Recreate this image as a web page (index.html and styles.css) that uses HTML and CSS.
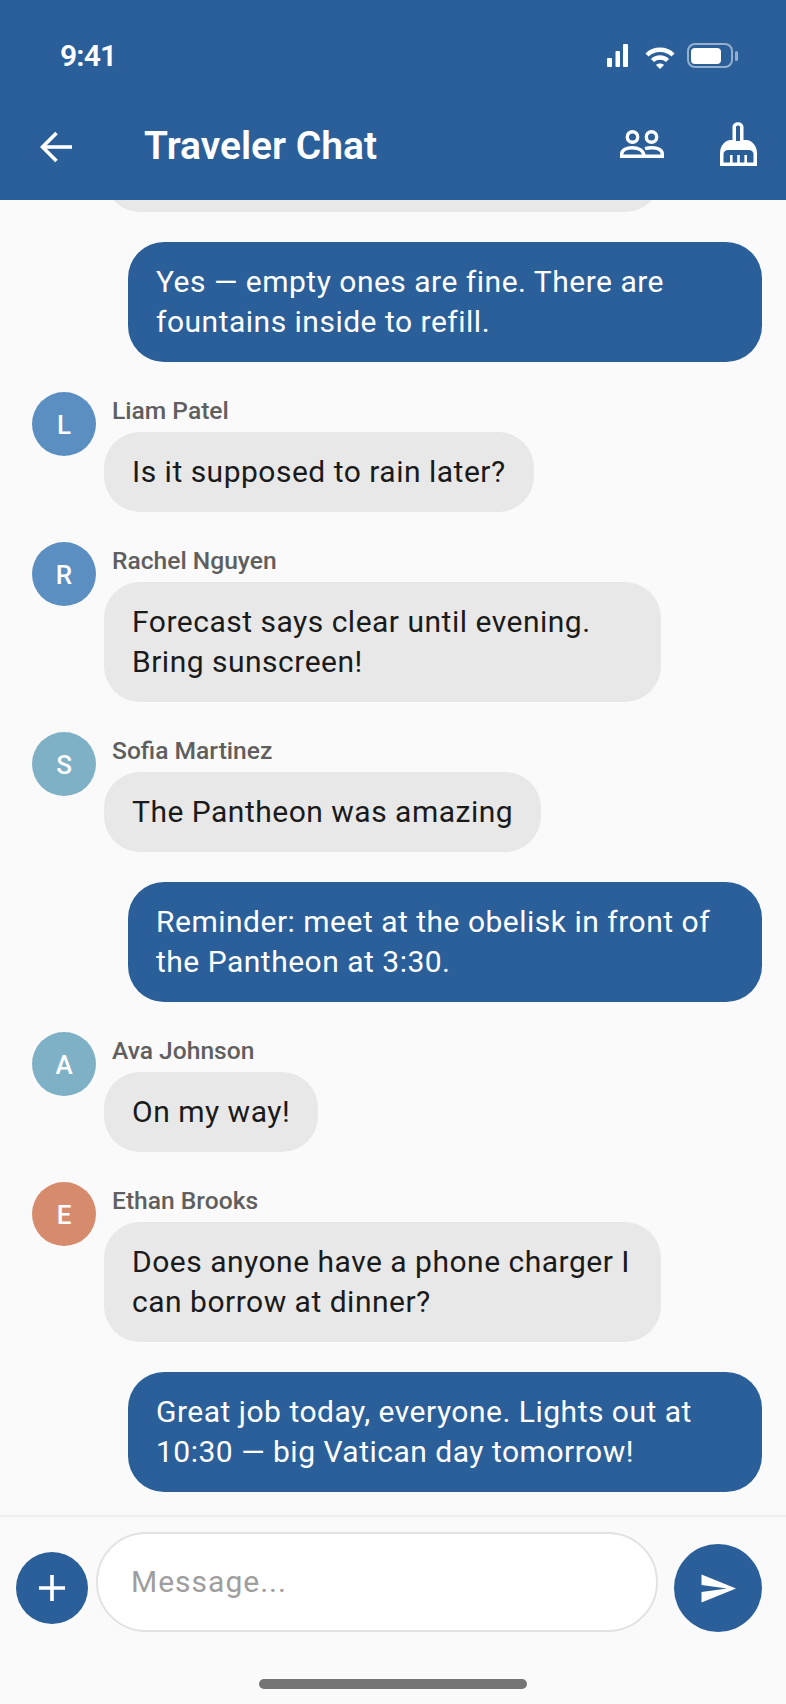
FILE: index.html
```html
<!DOCTYPE html>
<html lang="en">
<head>
    <meta charset="UTF-8">
    <meta name="viewport" content="width=device-width, initial-scale=1.0">
    <title>Traveler Chat</title>
    <link rel="stylesheet" href="styles.css">
</head>
<body>
    <div class="screen">
        <header class="app-header">
            <div class="status-bar">
                <span class="status-time">9:41</span>
                <div class="status-icons">
                    <svg class="icon-signal" width="21" height="23" viewBox="0 0 21 23" fill="#fff">
                        <rect x="0" y="14" width="5" height="9" rx="1"/>
                        <rect x="8.5" y="7" width="4.5" height="16" rx="1"/>
                        <rect x="16" y="0" width="5" height="23" rx="1"/>
                    </svg>
                    <svg class="icon-wifi" width="30" height="22" viewBox="0 0 30 22" fill="none" stroke="#fff" stroke-width="4.4">
                        <path d="M2 8 C9 1 21 1 28 8"/>
                        <path d="M7.5 13.5 C11.5 9.5 18.5 9.5 22.5 13.5"/>
                        <path d="M11 18 L15 22 L19 18 C17 16 13 16 11 18Z" fill="#fff" stroke="none"/>
                    </svg>
                    <div class="battery">
                        <div class="battery-body"><div class="battery-level"></div></div>
                        <div class="battery-nub"></div>
                    </div>
                </div>
            </div>
            <div class="toolbar">
                <svg class="icon-back" width="32" height="32" viewBox="0 0 32 32" fill="none" stroke="#fff" stroke-width="3.6">
                    <path d="M32 16 H3"/>
                    <path d="M16.5 2 L2.5 16 L16.5 30"/>
                </svg>
                <h1 class="chat-title">Traveler Chat</h1>
                <svg class="icon-group" width="44" height="28" viewBox="0 0 44 28" fill="none" stroke="#fff" stroke-width="3.4">
                    <circle cx="12.5" cy="7" r="5.2"/>
                    <circle cx="31.5" cy="7" r="5.2"/>
                    <path d="M1.7 26.3 V24 C1.7 20 7 17.7 12 17.7 C18 17.7 24 20 24 26.3 Z"/>
                    <path d="M25 18.6 C27 18 29.5 17.7 32 17.7 C37.5 17.7 42.3 20 42.3 24 V26.3 H24"/>
                </svg>
                <svg class="icon-broom" width="37" height="44" viewBox="0 0 37 44" fill="#fff" fill-rule="evenodd">
                    <path d="M12.5 18 V5 C12.5 -1.5 23.5 -1.5 23.5 5 V18 H26 C32 18 37 24 37 31 V44 H0 V31 C0 24 5 18 11 18 Z
                             M16 19 H20 V5 C20 3 16 3 16 5 Z
                             M3.5 40.5 V32 C3.5 30 5.5 28 8 28 H29 C31.5 28 33.5 30 33.5 32 V40.5 Z"/>
                    <rect x="10" y="33" width="2.6" height="8"/>
                    <rect x="17.2" y="33" width="2.6" height="8"/>
                    <rect x="24.4" y="33" width="2.6" height="8"/>
                </svg>
            </div>
        </header>

        <main class="messages">
            <div class="msg incoming">
                <div class="msg-body">
                    <div class="bubble bubble-cut"></div>
                </div>
            </div>

            <div class="msg outgoing">
                <div class="bubble">Yes — empty ones are fine. There are fountains inside to refill.</div>
            </div>

            <div class="msg incoming">
                <div class="avatar avatar-blue">L</div>
                <div class="msg-body">
                    <div class="sender">Liam Patel</div>
                    <div class="bubble">Is it supposed to rain later?</div>
                </div>
            </div>

            <div class="msg incoming">
                <div class="avatar avatar-blue">R</div>
                <div class="msg-body">
                    <div class="sender">Rachel Nguyen</div>
                    <div class="bubble">Forecast says clear until evening. Bring sunscreen!</div>
                </div>
            </div>

            <div class="msg incoming">
                <div class="avatar avatar-teal">S</div>
                <div class="msg-body">
                    <div class="sender">Sofia Martinez</div>
                    <div class="bubble">The Pantheon was amazing</div>
                </div>
            </div>

            <div class="msg outgoing">
                <div class="bubble">Reminder: meet at the obelisk in front of the Pantheon at 3:30.</div>
            </div>

            <div class="msg incoming">
                <div class="avatar avatar-teal">A</div>
                <div class="msg-body">
                    <div class="sender">Ava Johnson</div>
                    <div class="bubble">On my way!</div>
                </div>
            </div>

            <div class="msg incoming">
                <div class="avatar avatar-orange">E</div>
                <div class="msg-body">
                    <div class="sender">Ethan Brooks</div>
                    <div class="bubble">Does anyone have a phone charger I can borrow at dinner?</div>
                </div>
            </div>

            <div class="msg outgoing">
                <div class="bubble">Great job today, everyone. Lights out at 10:30 — big Vatican day tomorrow!</div>
            </div>
        </main>

        <footer class="composer">
            <div class="composer-row">
                <button class="add-btn" aria-label="Add">
                    <svg width="28" height="28" viewBox="0 0 28 28" stroke="#fff" stroke-width="3.6">
                        <path d="M14 1 V27 M1 14 H27"/>
                    </svg>
                </button>
                <div class="message-input">Message...</div>
                <button class="send-btn" aria-label="Send">
                    <svg width="35" height="29" viewBox="0 0 35 29" fill="#fff">
                        <path d="M0.5 0.5 L35 14.5 L0.5 28.5 V18 L26 14.5 L0.5 11 Z"/>
                    </svg>
                </button>
            </div>
            <div class="home-bar"></div>
        </footer>
    </div>
</body>
</html>
```

FILE: styles.css
```css
* {
    box-sizing: border-box;
}
html, body {
    margin: 0;
    padding: 0;
}
body {
    font-family: Roboto, "Liberation Sans", sans-serif;
    background-color: #fafafa;
    color: #1a1a1a;
}
.screen {
    width: 786px;
    height: 1704px;
    display: flex;
    flex-direction: column;
    overflow: hidden;
}

/* header */
.app-header {
    height: 200px;
    flex-shrink: 0;
    background-color: #2b5f9a;
    color: white;
}
.status-bar {
    height: 100px;
    display: flex;
    justify-content: space-between;
    padding: 38px 48px 0 60px;
}
.status-time {
    font-size: 30px;
    font-weight: 600;
    line-height: 36px;
    letter-spacing: -0.8px;
}
.status-icons {
    display: flex;
    align-items: flex-start;
    padding-top: 5px;
}
.icon-signal {
    margin: 1px 17px 0 0;
}
.icon-wifi {
    margin: 4px 12px 0 0;
}
.battery {
    display: flex;
    align-items: center;
}
.battery-body {
    width: 46px;
    height: 25px;
    padding: 2.5px 3px 2.5px 2px;
    border: 2px solid rgba(255, 255, 255, 0.5);
    border-radius: 8px;
}
.battery-level {
    width: 30px;
    height: 100%;
    background-color: white;
    border-radius: 4px;
}
.battery-nub {
    width: 3px;
    height: 10px;
    margin-left: 2px;
    background-color: rgba(255, 255, 255, 0.5);
    border-radius: 2px;
}
.toolbar {
    height: 100px;
    display: flex;
    align-items: center;
    padding: 0 29px 0 40px;
}
.chat-title {
    flex: 1;
    margin: -8px 0 0 72px;
    font-size: 39px;
    font-weight: 600;
    line-height: 46px;
}
.icon-back {
    margin-top: -6px;
}
.icon-group {
    margin: -12px 56px 0 0;
}
.icon-broom {
    margin-top: -12px;
}

/* messages */
.messages {
    flex: 1;
    min-height: 0;
    display: flex;
    flex-direction: column;
    justify-content: flex-end;
    gap: 30px;
    padding: 0 24px 23px 32px;
    overflow: hidden;
}
.msg {
    display: flex;
    flex-shrink: 0;
}
.msg.outgoing {
    justify-content: flex-end;
}
.msg.incoming {
    padding-right: 101px;
}
.msg-body {
    flex: 1;
    min-width: 0;
    padding-left: 8px;
}
.avatar {
    width: 64px;
    height: 64px;
    flex-shrink: 0;
    padding-top: 1px;
    border-radius: 50%;
    display: flex;
    align-items: center;
    justify-content: center;
    color: white;
    font-size: 26px;
    font-weight: 500;
}
.avatar-blue {
    background-color: #5b8fc2;
}
.avatar-teal {
    background-color: #7eb0c6;
}
.avatar-orange {
    background-color: #d78b6d;
}
.sender {
    height: 40px;
    padding: 4px 0 0 8px;
    font-size: 24.6px;
    font-weight: 500;
    line-height: 30px;
    color: #5f5f5f;
}
.bubble {
    width: fit-content;
    padding: 20px 28px;
    border-radius: 36px;
    font-size: 30px;
    line-height: 40px;
    letter-spacing: 0.5px;
}
.incoming .bubble {
    background-color: #e8e8e8;
    color: #1a1a1a;
}
.outgoing .bubble {
    max-width: 634px;
    background-color: #2b5f9a;
    color: white;
}
.incoming .bubble-cut {
    width: 557px;
    height: 120px;
    margin-left: 64px;
}

/* composer */
.composer {
    height: 189px;
    flex-shrink: 0;
    border-top: 2px solid #eeeeee;
    padding-top: 15px;
}
.composer-row {
    display: flex;
    align-items: flex-end;
    padding: 0 24px 0 16px;
}
.add-btn, .send-btn {
    flex-shrink: 0;
    padding: 0;
    border: none;
    border-radius: 50%;
    background-color: #2b5f9a;
    display: flex;
    align-items: center;
    justify-content: center;
}
.add-btn {
    width: 72px;
    height: 72px;
    margin-bottom: 8px;
}
.send-btn {
    width: 88px;
    height: 88px;
}
.message-input {
    flex: 1;
    height: 100px;
    margin: 0 16px 0 8px;
    padding: 0 33px 2px;
    display: flex;
    align-items: center;
    background-color: white;
    border: 2px solid #e2e2e2;
    border-radius: 50px;
    color: #9e9e9e;
    font-size: 30px;
    letter-spacing: 1px;
}
.home-bar {
    width: 268px;
    height: 10px;
    margin: 47px auto 0;
    background-color: #757575;
    border-radius: 5px;
}
```
